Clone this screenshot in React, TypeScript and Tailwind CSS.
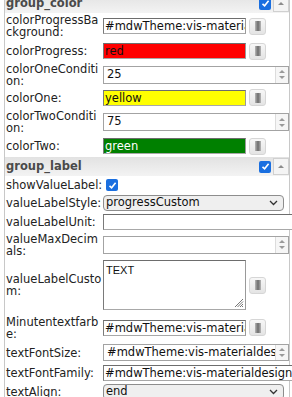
import React from "react";

function Check({ className = "" }: { className?: string }) {
  return (
    <div className={`flex h-[12px] w-[12px] items-center justify-center rounded-[2px] bg-[#1a6fe0] ${className}`}>
      <svg width="9" height="9" viewBox="0 0 9 9">
        <path d="M1.5 4.8 L3.6 6.8 L7.6 1.8" fill="none" stroke="white" strokeWidth="1.6" />
      </svg>
    </div>
  );
}

function Header({ title }: { title: string }) {
  return (
    <div className="flex h-[19px] items-center bg-gradient-to-b from-[#e2e2e2] to-[#f3f3f3] pl-[1px] font-bold text-[#4a4a4a]">
      <span className="flex-1">{title}</span>
      <Check className="mr-[2px]" />
      <div className="flex h-[17px] w-[16px] items-center justify-center border border-[#d0d0d0] bg-[#f4f4f4]">
        <div className="border-x-[3px] border-b-[3px] border-x-transparent border-b-[#8c8c8c]" />
      </div>
    </div>
  );
}

function Label({ children }: { children: React.ReactNode }) {
  return <div className="w-[97px] shrink-0 break-all leading-[12px] text-[#222]">{children}</div>;
}

function Btn() {
  return (
    <div className="ml-[3px] flex h-[17px] w-[17px] items-center justify-center rounded-[3px] border border-[#d6d6d6] bg-gradient-to-b from-[#f7f7f7] to-[#e4e4e4]">
      <div className="h-[10px] w-[6px] bg-gradient-to-r from-[#b8b8b8] via-[#6c6c6c] to-[#b8b8b8]" />
    </div>
  );
}

function TextIn({ value = "", className = "bg-white text-[#111]", w = "w-[143px]" }: { value?: string; className?: string; w?: string }) {
  return (
    <div className={`flex h-[16px] ${w} shrink-0 items-center overflow-hidden whitespace-nowrap border border-t-[#6d6d6d] border-l-[#7a7a7a] border-r-[#9a9a9a] border-b-[#a8a8a8] pl-[1px] leading-[14px] ${className}`}>
      {value}
    </div>
  );
}

function Spin() {
  return (
    <div className="flex h-full w-[13px] shrink-0 flex-col items-center justify-center gap-[3px] border-l border-[#dcdcdc] bg-[#f6f6f6]">
      <div className="border-x-[3px] border-b-[3px] border-x-transparent border-b-[#9a9a9a]" />
      <div className="border-x-[3px] border-t-[3px] border-x-transparent border-t-[#9a9a9a]" />
    </div>
  );
}

function NumIn({ value = "", h = "h-[18px]" }: { value?: string; h?: string }) {
  return (
    <div className={`flex ${h} w-[186px] shrink-0 items-center border border-[#a3a3a3] bg-white`}>
      <span className="flex-1 overflow-hidden whitespace-nowrap pl-[3px] text-[#111]">{value}</span>
      <Spin />
    </div>
  );
}

function Sel({ value }: { value: string }) {
  return (
    <div className="flex h-[16px] w-[181px] shrink-0 items-center rounded-[4px] border border-[#8d8d8d] bg-[#efefef] pl-[2px] text-[#111]">
      <span className="flex-1">{value}</span>
      <svg width="9" height="6" viewBox="0 0 9 6" className="mr-[5px]">
        <path d="M1 1 L4.5 4.5 L8 1" fill="none" stroke="#333" strokeWidth="1.3" />
      </svg>
    </div>
  );
}

export default function App() {
  return (
    <div className="h-[397px] w-[292px] overflow-hidden bg-white font-['DejaVu_Sans',Verdana,sans-serif] text-[11.5px]">
      <div className="ml-[4px] w-[286px] border-x border-[#c8c8c8]">
        <div className="-mt-[6px]">
          <Header title="group_color" />
        </div>

        <div className="flex h-[26px] items-center pl-[1px]">
          <Label>colorProgressBackground:</Label>
          <TextIn value="#mdwTheme:vis-materialdesign.colors.progress.track_background" />
          <Btn />
        </div>
        <div className="flex h-[24px] items-center pl-[1px]">
          <Label>colorProgress:</Label>
          <TextIn value="red" className="bg-[#ff0000] text-[#111]" />
          <Btn />
        </div>
        <div className="flex h-[23px] items-center pl-[1px]">
          <Label>colorOneCondition:</Label>
          <NumIn value="25" />
        </div>
        <div className="flex h-[23px] items-center pl-[1px]">
          <Label>colorOne:</Label>
          <TextIn value="yellow" className="bg-[#ffff00] text-[#111]" />
          <Btn />
        </div>
        <div className="flex h-[26px] items-center pl-[1px]">
          <Label>colorTwoCondition:</Label>
          <NumIn value="75" />
        </div>
        <div className="flex h-[22px] items-center pl-[1px]">
          <Label>colorTwo:</Label>
          <TextIn value="green" className="bg-[#008000] text-white" />
          <Btn />
        </div>

        <Header title="group_label" />

        <div className="flex h-[18px] items-center pl-[1px]">
          <Label>showValueLabel:</Label>
          <Check className="ml-[3px]" />
        </div>
        <div className="flex h-[18px] items-center pl-[1px]">
          <Label>valueLabelStyle:</Label>
          <Sel value="progressCustom" />
        </div>
        <div className="flex h-[20px] items-center pl-[1px]">
          <Label>valueLabelUnit:</Label>
          <TextIn w="w-[192px]" />
        </div>
        <div className="flex h-[25px] items-center pl-[1px]">
          <Label>valueMaxDecimals:</Label>
          <NumIn />
        </div>
        <div className="flex h-[56px] items-center pl-[1px]">
          <Label>valueLabelCustom:</Label>
          <div className="relative h-[50px] w-[143px] shrink-0 border border-t-[#6d6d6d] border-l-[#7a7a7a] border-r-[#9a9a9a] border-b-[#a8a8a8] bg-white pl-[2px] pt-[3px] font-['Liberation_Sans',Arial,sans-serif] text-[11px] leading-[13px] text-[#111]">
            TEXT
            <svg width="12" height="12" viewBox="0 0 12 12" className="absolute bottom-[1px] right-[1px]">
              <path d="M11 3 L3 11 M11 5.5 L5.5 11 M11 8 L8 11 M11 10 L10 11" stroke="#777" strokeWidth="1" />
            </svg>
          </div>
          <Btn />
        </div>
        <div className="flex h-[29px] items-center pl-[1px]">
          <Label>Minutentextfarbe:</Label>
          <TextIn value="#mdwTheme:vis-materialdesign.colors.progress.text" />
          <Btn />
        </div>
        <div className="flex h-[21px] items-center pl-[1px]">
          <Label>textFontSize:</Label>
          <NumIn value="#mdwTheme:vis-materialdesign.font.size.progress" h="h-[17px]" />
        </div>
        <div className="flex h-[19px] items-center pl-[1px]">
          <Label>textFontFamily:</Label>
          <TextIn value="#mdwTheme:vis-materialdesign.font.family.progress" w="w-[192px]" />
        </div>
        <div className="flex h-[19px] items-center pl-[1px]">
          <Label>textAlign:</Label>
          <Sel value="end" />
        </div>
      </div>
    </div>
  );
}
